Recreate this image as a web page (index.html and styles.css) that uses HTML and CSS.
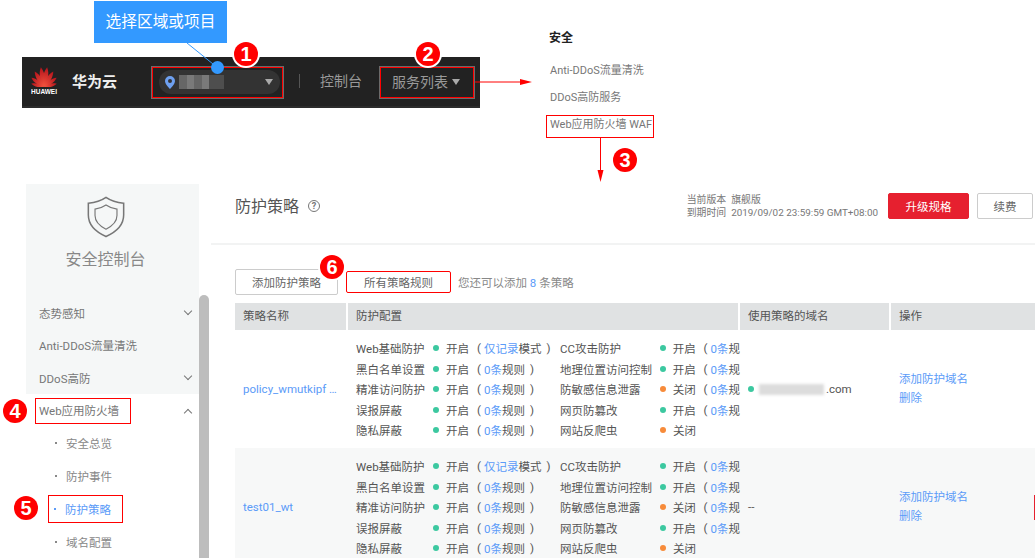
FILE: index.html
```html
<!DOCTYPE html>
<html lang="zh-CN">
<head>
<meta charset="UTF-8">
<meta name="viewport" content="width=device-width, initial-scale=1.0">
<title>WAF 防护策略</title>
<link rel="stylesheet" href="styles.css">
</head>
<body>
<div class="top">
    <div class="bar">
        <div class="logo">
            <svg width="26" height="20" viewBox="0 0 26 20">
                <defs>
                    <linearGradient id="petal-fill" x1="0" y1="1" x2="0" y2="0">
                        <stop offset="0" stop-color="#f4553f"/>
                        <stop offset="1" stop-color="#b5121b"/>
                    </linearGradient>
                    <path id="petal" fill="url(#petal-fill)" d="M0 0C-3-6-3.5-14 0-20C3.5-14 3-6 0 0Z"/>
                </defs>
                <use href="#petal" transform="translate(13 20) rotate(-9)"/>
                <use href="#petal" transform="translate(13 20) rotate(9)"/>
                <use href="#petal" transform="translate(13 20) rotate(-31) scale(.9)"/>
                <use href="#petal" transform="translate(13 20) rotate(31) scale(.9)"/>
                <use href="#petal" transform="translate(13 20) rotate(-54) scale(.78)"/>
                <use href="#petal" transform="translate(13 20) rotate(54) scale(.78)"/>
                <use href="#petal" transform="translate(13 20) rotate(-76) scale(.66)"/>
                <use href="#petal" transform="translate(13 20) rotate(76) scale(.66)"/>
            </svg>
            <span class="logo-name">HUAWEI</span>
        </div>
        <span class="brand">华为云</span>
        <div class="mark region-mark">
            <div class="region">
                <svg class="pin" width="10" height="13" viewBox="0 0 10 13"><path fill="#6ea0f0" d="M5 0a5 5 0 0 0-5 5c0 3.4 5 8 5 8s5-4.6 5-8a5 5 0 0 0-5-5zm0 7a2 2 0 1 1 0-4 2 2 0 0 1 0 4z"/></svg>
                <div class="pixels"><i></i><i></i><i></i><i></i><i></i><i></i></div>
                <span class="caret"></span>
            </div>
        </div>
        <span class="divider"></span>
        <span class="bar-link">控制台</span>
        <div class="mark service-mark">
            <span class="bar-link">服务列表</span>
            <span class="caret"></span>
        </div>
    </div>
    <div class="menu">
        <h4 class="menu-title">安全</h4>
        <div class="menu-item">Anti-DDoS流量清洗</div>
        <div class="menu-item">DDoS高防服务</div>
        <div class="menu-item mark waf-mark">Web应用防火墙 WAF</div>
    </div>
</div>

<div class="console">
    <aside class="side">
        <div class="side-top">
            <div class="side-head">
                <svg width="40" height="42" viewBox="0 0 40 44" fill="none" stroke="#777">
                    <path stroke-width="1.6" d="M20 1.5C15 5 8 7 1.5 7.5V20C1.5 31 11 38.5 20 42.5C29 38.5 38.5 31 38.5 20V7.5C32 7 25 5 20 1.5Z"/>
                    <path stroke-width="1.2" d="M20 9.5C16.5 12 12.5 13.3 8.5 13.7V20.5C8.5 27 14 31.8 20 34.8C26 31.8 31.5 27 31.5 20.5V13.7C27.5 13.3 23.5 12 20 9.5Z"/>
                </svg>
                <div class="side-title">安全控制台</div>
            </div>
            <div class="nav-item">态势感知<span class="chev"></span></div>
            <div class="nav-item">Anti-DDoS流量清洗</div>
            <div class="nav-item">DDoS高防<span class="chev"></span></div>
        </div>
        <div class="nav-item"><span class="mark nav-mark">Web应用防火墙</span><span class="chev up"></span></div>
        <div class="sub-item"><span class="sub-dot"></span>安全总览</div>
        <div class="sub-item"><span class="sub-dot"></span>防护事件</div>
        <div class="sub-item active"><span class="mark sub-mark"><span class="sub-dot"></span>防护策略</span></div>
        <div class="sub-item"><span class="sub-dot"></span>域名配置</div>
    </aside>
    <div class="scroll"><div class="scroll-thumb"></div></div>

    <main class="main">
        <header class="head">
            <h2 class="title">防护策略</h2>
            <span class="help">?</span>
            <div class="edition">
                <div><span class="edition-key">当前版本</span>旗舰版</div>
                <div><span class="edition-key">到期时间</span>2019/09/02 23:59:59 GMT+08:00</div>
            </div>
            <button class="btn btn-red">升级规格</button>
            <button class="btn">续费</button>
        </header>

        <div class="tools">
            <button class="btn btn-tool">添加防护策略</button>
            <button class="btn btn-tool btn-marked">所有策略规则</button>
            <span class="tools-note">您还可以添加 <a>8</a> 条策略</span>
        </div>

        <div class="tbl">
            <div class="tbl-row tbl-head">
                <div>策略名称</div>
                <div>防护配置</div>
                <div>使用策略的域名</div>
                <div>操作</div>
            </div>

            <div class="tbl-row">
                <div class="cell"><a>policy_wmutkipf …</a></div>
                <div class="cfg">
                    <div class="cfg-col">
                        <div class="cfg-line"><span class="cfg-name">Web基础防护</span><span class="dot"></span><span class="state">开启</span><span class="par">(</span><a>仅记录</a>模式<span class="par end">)</span></div>
                        <div class="cfg-line"><span class="cfg-name">黑白名单设置</span><span class="dot"></span><span class="state">开启</span><span class="par">(</span><a>0条</a>规则<span class="par end">)</span></div>
                        <div class="cfg-line"><span class="cfg-name">精准访问防护</span><span class="dot"></span><span class="state">开启</span><span class="par">(</span><a>0条</a>规则<span class="par end">)</span></div>
                        <div class="cfg-line"><span class="cfg-name">误报屏蔽</span><span class="dot"></span><span class="state">开启</span><span class="par">(</span><a>0条</a>规则<span class="par end">)</span></div>
                        <div class="cfg-line"><span class="cfg-name">隐私屏蔽</span><span class="dot"></span><span class="state">开启</span><span class="par">(</span><a>0条</a>规则<span class="par end">)</span></div>
                    </div>
                    <div class="cfg-col right">
                        <div class="cfg-line"><span class="cfg-name">CC攻击防护</span><span class="dot"></span><span class="state">开启</span><span class="par">(</span><a>0条</a>规</div>
                        <div class="cfg-line"><span class="cfg-name">地理位置访问控制</span><span class="dot"></span><span class="state">开启</span><span class="par">(</span><a>0条</a>规</div>
                        <div class="cfg-line"><span class="cfg-name">防敏感信息泄露</span><span class="dot off"></span><span class="state">关闭</span><span class="par">(</span><a>0条</a>规</div>
                        <div class="cfg-line"><span class="cfg-name">网页防篡改</span><span class="dot"></span><span class="state">开启</span><span class="par">(</span><a>0条</a>规</div>
                        <div class="cfg-line"><span class="cfg-name">网站反爬虫</span><span class="dot off"></span><span class="state">关闭</span></div>
                    </div>
                </div>
                <div class="cell domain"><span class="dot"></span><span class="blurred"></span>.com</div>
                <div class="cell ops"><a>添加防护域名</a><a>删除</a></div>
            </div>

            <div class="tbl-row alt">
                <div class="cell"><a>test01_wt</a></div>
                <div class="cfg">
                    <div class="cfg-col">
                        <div class="cfg-line"><span class="cfg-name">Web基础防护</span><span class="dot"></span><span class="state">开启</span><span class="par">(</span><a>仅记录</a>模式<span class="par end">)</span></div>
                        <div class="cfg-line"><span class="cfg-name">黑白名单设置</span><span class="dot"></span><span class="state">开启</span><span class="par">(</span><a>0条</a>规则<span class="par end">)</span></div>
                        <div class="cfg-line"><span class="cfg-name">精准访问防护</span><span class="dot"></span><span class="state">开启</span><span class="par">(</span><a>0条</a>规则<span class="par end">)</span></div>
                        <div class="cfg-line"><span class="cfg-name">误报屏蔽</span><span class="dot"></span><span class="state">开启</span><span class="par">(</span><a>0条</a>规则<span class="par end">)</span></div>
                        <div class="cfg-line"><span class="cfg-name">隐私屏蔽</span><span class="dot"></span><span class="state">开启</span><span class="par">(</span><a>0条</a>规则<span class="par end">)</span></div>
                    </div>
                    <div class="cfg-col right">
                        <div class="cfg-line"><span class="cfg-name">CC攻击防护</span><span class="dot"></span><span class="state">开启</span><span class="par">(</span><a>0条</a>规</div>
                        <div class="cfg-line"><span class="cfg-name">地理位置访问控制</span><span class="dot"></span><span class="state">开启</span><span class="par">(</span><a>0条</a>规</div>
                        <div class="cfg-line"><span class="cfg-name">防敏感信息泄露</span><span class="dot off"></span><span class="state">关闭</span><span class="par">(</span><a>0条</a>规</div>
                        <div class="cfg-line"><span class="cfg-name">网页防篡改</span><span class="dot"></span><span class="state">开启</span><span class="par">(</span><a>0条</a>规</div>
                        <div class="cfg-line"><span class="cfg-name">网站反爬虫</span><span class="dot off"></span><span class="state">关闭</span></div>
                    </div>
                </div>
                <div class="cell domain">--</div>
                <div class="cell ops"><a>添加防护域名</a><a>删除</a></div>
            </div>
        </div>
    </main>
</div>

<!-- annotations drawn over the screenshot -->
<svg class="lines" width="1035" height="558" viewBox="0 0 1035 558">
    <path d="M187 43L213 64" stroke="#3399ff" fill="none"/>
    <path d="M475 82H522" stroke="#f00" fill="none"/>
    <path d="M520 79L532 82L520 85Z" fill="#f00"/>
    <path d="M600.5 138V172" stroke="#f00" fill="none"/>
    <path d="M597.5 170L600.5 182L603.5 170Z" fill="#f00"/>
</svg>
<div class="callout">选择区域或项目</div>
<span class="blue-dot"></span>
<span class="badge b1">1</span>
<span class="badge b2">2</span>
<span class="badge b3">3</span>
<span class="badge b4">4</span>
<span class="badge b5">5</span>
<span class="badge b6">6</span>
<span class="sliver"></span>
</body>
</html>
```

FILE: styles.css
```css
html, body {
    margin: 0;
    padding: 0;
}
body {
    position: relative;
    width: 1035px;
    height: 558px;
    overflow: hidden;
    background: #fff;
    color: #666;
    font: 11.5px Roboto, "Noto Sans CJK SC", sans-serif;
}
a {
    color: #5b9bf8;
}

/* top part: console bar and service menu */
.top {
    display: flex;
    align-items: flex-start;
    height: 184px;
    padding-left: 22px;
    box-sizing: border-box;
}
.bar {
    display: flex;
    align-items: center;
    box-sizing: border-box;
    width: 458px;
    height: 51px;
    margin-top: 57px;
    padding: 0 0 2px 9px;
    background: #222;
    border-bottom: 2px solid #2c2c2c;
}
.logo {
    display: flex;
    flex-direction: column;
    align-items: center;
    width: 26px;
}
.logo-name {
    margin-top: 1px;
    color: #fff;
    font: bold 6.5px/7px "Liberation Sans", sans-serif;
}
.brand {
    margin-left: 15px;
    color: #eee;
    font-size: 15px;
    font-weight: 700;
}
.mark {
    border: 1px solid #f00;
}
.region-mark {
    display: flex;
    align-items: center;
    width: 131px;
    height: 31px;
    margin: 3px 0 0 35px;
    padding-left: 6px;
    box-sizing: border-box;
    outline: 1px solid #6a6a6a;
}
.region {
    display: flex;
    align-items: center;
    width: 121px;
    height: 24px;
    padding-left: 6px;
    box-sizing: border-box;
    background: #333;
    border-radius: 12px;
}
.pixels {
    display: flex;
    margin-left: 4px;
}
.pixels i {
    width: 7.5px;
    height: 14px;
    background: #666;
}
.pixels i:nth-child(2n) {
    background: #7a7a7a;
}
.pixels i:nth-child(5), .pixels i:nth-child(6) {
    background: #4e4e4e;
}
.caret {
    width: 0;
    height: 0;
    margin-left: auto;
    margin-right: 7px;
    border-left: 4px solid transparent;
    border-right: 4px solid transparent;
    border-top: 6px solid #aaa;
}
.divider {
    width: 1px;
    height: 14px;
    margin-left: 16px;
    background: #555;
}
.bar-link {
    margin-bottom: 2px;
    color: #999;
    font-size: 14px;
}
.divider + .bar-link {
    margin-left: 20px;
}
.service-mark {
    display: flex;
    align-items: center;
    width: 94px;
    height: 31px;
    margin: 3px 0 0 18px;
    padding-left: 11px;
    box-sizing: border-box;
    outline: 1px solid #6a6a6a;
}
.service-mark .caret {
    margin-right: 13px;
}

.menu {
    margin: 30px 0 0 69px;
    color: #777;
}
.menu-title {
    margin: 0 0 15px;
    color: #222;
    font-size: 12px;
    line-height: 16px;
    font-weight: 700;
}
.menu-item {
    width: 108px;
    height: 23px;
    margin-bottom: 4px;
    padding-left: 1px;
    box-sizing: border-box;
    font-size: 11px;
    line-height: 20px;
    white-space: nowrap;
}
.waf-mark {
    margin-left: -3px;
    padding-left: 3px;
    line-height: 18px;
}

/* console */
.console {
    display: flex;
    height: 374px;
}
.side {
    width: 173px;
    margin-left: 26px;
}
.side-top {
    background: #f5f7f7;
}
.side-head {
    display: flex;
    flex-direction: column;
    align-items: center;
    height: 112.5px;
    padding: 12px 14px 0 0;
    box-sizing: border-box;
}
.side-title {
    margin-top: 11px;
    color: #888;
    font-size: 16px;
    line-height: 22px;
}
.nav-item {
    display: flex;
    align-items: center;
    justify-content: space-between;
    height: 32.67px;
    padding: 0 8px 0 13px;
    color: #777;
}
.nav-mark {
    width: 91px;
    height: 24px;
    margin-left: -4px;
    padding-left: 3px;
    line-height: 24px;
}
.chev {
    width: 5px;
    height: 5px;
    margin-top: -4px;
    border-right: 1.5px solid #777;
    border-bottom: 1.5px solid #777;
    transform: rotate(45deg);
}
.chev.up {
    margin-top: 4px;
    transform: rotate(225deg);
}
.sub-item {
    display: flex;
    align-items: center;
    height: 32.7px;
    padding-left: 29px;
    color: #888;
}
.sub-dot {
    width: 2px;
    height: 2px;
    margin-right: 9px;
    background: #888;
}
.sub-item.active {
    color: #5b9bf8;
}
.sub-item.active .sub-dot {
    background: #5b9bf8;
}
.sub-mark {
    display: flex;
    align-items: center;
    width: 75px;
    height: 28px;
    margin-left: -7px;
    padding-left: 5px;
    box-sizing: border-box;
}
.scroll {
    width: 10px;
}
.scroll-thumb {
    height: 263px;
    margin-top: 111px;
    background: #bdbdbd;
    border-radius: 5px 5px 0 0;
}

.main {
    flex: 1;
    margin-left: 2px;
}
.head {
    display: flex;
    align-items: center;
    height: 61px;
    padding: 0 0 15px 24px;
    border-bottom: 2px solid #f2f3f3;
    box-sizing: border-box;
}
.title {
    margin: -3px 0 0;
    color: #555;
    font-size: 16px;
    font-weight: 400;
}
.help {
    width: 10px;
    height: 10px;
    margin-left: 9px;
    border: 1.5px solid #777;
    border-radius: 50%;
    color: #777;
    font-size: 9px;
    font-weight: 700;
    line-height: 10px;
    text-align: center;
}
.edition {
    margin-left: auto;
    color: #777;
    font-size: 9.9px;
    line-height: 13px;
}
.edition-key {
    margin-right: 5px;
}
.btn {
    height: 26px;
    padding: 0;
    background: #fff;
    border: 1px solid #ccc;
    border-radius: 2px;
    color: #666;
    font: 11.5px Roboto, "Noto Sans CJK SC", sans-serif;
}
.head .btn {
    width: 56px;
    margin: 0 2px 0 8px;
}
.head .btn-red {
    width: 81px;
    margin: 0 0 0 10px;
    background: #e6202f;
    border-color: #e6202f;
    color: #fff;
}
.tools {
    display: flex;
    align-items: center;
    height: 26px;
    margin: 24px 0 8px 24px;
}
.btn-tool {
    width: 103px;
}
.btn-marked {
    width: 105px;
    height: 22px;
    margin-left: 8px;
    border-color: #f00;
}
.tools-note {
    margin-left: 7px;
    color: #888;
}
.tbl {
    margin-left: 24px;
}
.tbl-row {
    display: grid;
    grid-template-columns: 111px 390px 149px 144px;
    column-gap: 2px;
}
.tbl-head {
    height: 27px;
    color: #555;
    line-height: 27px;
}
.tbl-head div {
    padding-left: 8px;
    background: #e0e2e3;
}
.tbl-row.alt {
    background: #f7f8f8;
}
.cell {
    display: flex;
    align-items: center;
    padding-left: 8px;
    color: #555;
    white-space: nowrap;
}
.cfg {
    display: flex;
    height: 102.5px;
    padding: 8px 0 7.5px 8px;
    color: #555;
}
.cfg-col {
    width: 204px;
    flex-shrink: 0;
}
.cfg-col.right {
    width: 180px;
}
.cfg-line {
    display: flex;
    align-items: center;
    height: 20.5px;
    white-space: nowrap;
}
.cfg-name {
    width: 77px;
}
.right .cfg-name {
    width: 100px;
}
.dot {
    width: 6px;
    height: 6px;
    margin-right: 7px;
    background: #3cc8a0;
    border-radius: 50%;
}
.dot.off {
    background: #f78b3a;
}
.state {
    width: 24px;
}
.par {
    margin: 0 3px 0 7px;
}
.par.end {
    margin: 0 0 0 5px;
}
.domain .dot {
    margin-right: 5px;
}
.blurred {
    width: 65px;
    height: 11px;
    margin-right: 2px;
    background: #dcdcdc;
    filter: blur(1.5px);
}
.ops {
    flex-direction: column;
    align-items: flex-start;
    justify-content: center;
    gap: 4px;
    line-height: 15px;
}

/* annotations */
.lines {
    position: absolute;
    top: 0;
    left: 0;
}
.callout {
    position: absolute;
    top: 1px;
    left: 94px;
    width: 133px;
    height: 42px;
    background: #3399ff;
    color: #fff;
    font-size: 15.7px;
    line-height: 42px;
    text-align: center;
}
.blue-dot {
    position: absolute;
    top: 61px;
    left: 211px;
    width: 13px;
    height: 13px;
    background: #3399ff;
    border-radius: 50%;
}
.badge {
    position: absolute;
    width: 24px;
    height: 24px;
    background: #f00;
    border-radius: 50%;
    color: #fff;
    font: bold 20px/24px "Liberation Sans", sans-serif;
    text-align: center;
}
.b1, .b2, .b6 {
    box-shadow: 0 0 0 2px #fff;
}
.b1 { top: 42px; left: 234px; }
.b2 { top: 42px; left: 416px; }
.b3 { top: 148px; left: 613px; }
.b4 { top: 399px; left: 3px; }
.b5 { top: 496px; left: 14px; }
.b6 { top: 255px; left: 320px; }
.sliver {
    position: absolute;
    top: 495px;
    left: 1034px;
    width: 1px;
    height: 25px;
    background: #e6202f;
}
```
